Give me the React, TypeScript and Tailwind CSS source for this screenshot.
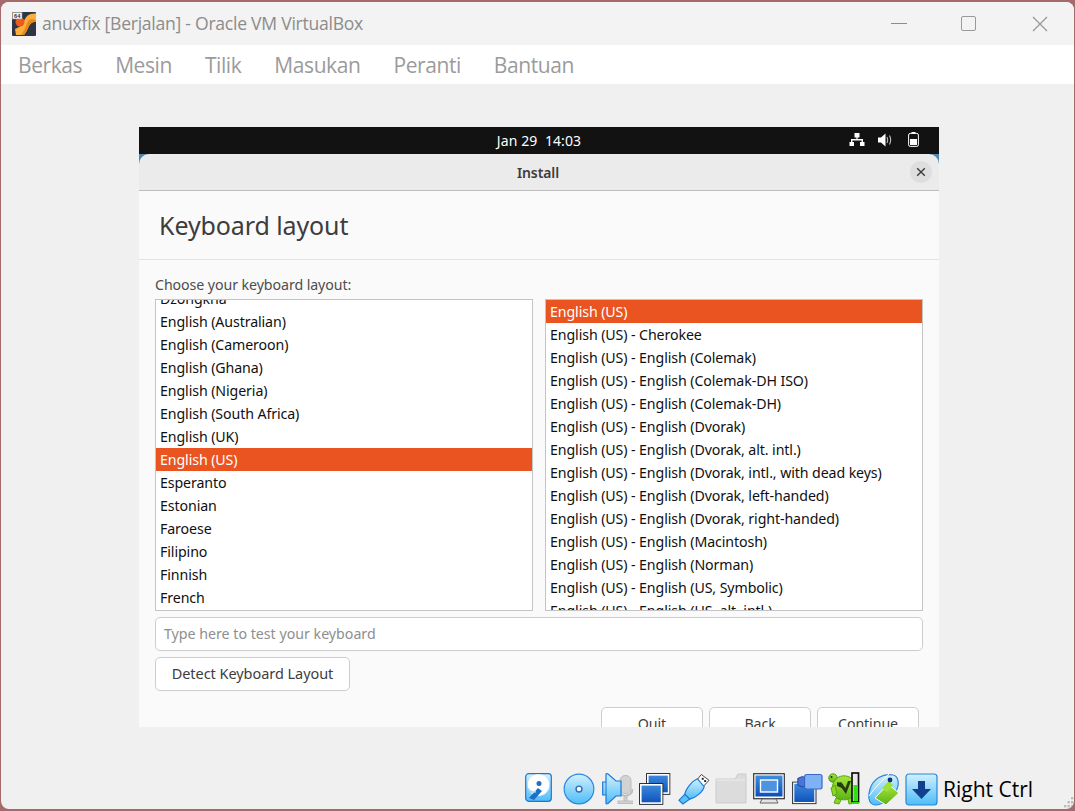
import React from "react";

const ubuntu = { fontFamily: '"Noto Sans", "DejaVu Sans", sans-serif' };

const leftRows = [
  "Dzongkha", "English (Australian)", "English (Cameroon)", "English (Ghana)", "English (Nigeria)",
  "English (South Africa)", "English (UK)", "English (US)", "Esperanto", "Estonian", "Faroese",
  "Filipino", "Finnish", "French",
];
const rightRows = [
  "English (US)", "English (US) - Cherokee", "English (US) - English (Colemak)",
  "English (US) - English (Colemak-DH ISO)", "English (US) - English (Colemak-DH)",
  "English (US) - English (Dvorak)", "English (US) - English (Dvorak, alt. intl.)",
  "English (US) - English (Dvorak, intl., with dead keys)", "English (US) - English (Dvorak, left-handed)",
  "English (US) - English (Dvorak, right-handed)", "English (US) - English (Macintosh)",
  "English (US) - English (Norman)", "English (US) - English (US, Symbolic)",
  "English (US) - English (US, alt. intl.)",
];

function ListBox({ rows, selected, offset }: { rows: string[]; selected: string; offset: string }) {
  let done = false;
  return (
    <div className="h-[312px] w-[378px] overflow-hidden border border-[#c4c4c4] bg-white">
      <div className={offset}>
        {rows.map((r) => {
          const sel = !done && r === selected;
          if (sel) done = true;
          return (
            <div
              key={r}
              className={`h-[23px] whitespace-nowrap pl-[4px] text-[14.2px] leading-[23px] tracking-[-0.1px] ${
                sel ? "bg-[#e95420] text-white" : "text-[#101010]"
              }`}
            >
              {r}
            </div>
          );
        })}
      </div>
    </div>
  );
}

function VBoxLogo() {
  return (
    <svg width="24" height="24" viewBox="0 0 24 24">
      <rect width="24" height="24" fill="#2f3541" rx="1" />
      <path d="M24 1.5 C17 1 14 4 12 9 C10 13 8 15 3 17 L4 23 L12 23 C15 20 16 15 18 12.5 C20 10 22 10 24 10 Z" fill="#fbb03b" />
      <path d="M16 9 C14 13 13 18 9 23 L12 23 C15 20 16 15 18 12.5 C20 10 22 10 24 10 L24 8 C20 7 18 7 16 9 Z" fill="#e8871c" />
      <circle cx="8" cy="10" r="4.5" fill="#ee5a1a" />
      <rect x="0.5" y="0.5" width="9.5" height="6.5" fill="#f2f2f2" stroke="#999" strokeWidth="0.6" />
      <text x="5.2" y="5.9" textAnchor="middle" fontSize="5.6" fontWeight="700" fill="#333" fontFamily="Liberation Sans, sans-serif">64</text>
    </svg>
  );
}

const Defs = () => (
  <defs>
    <linearGradient id="lb" x1="0" y1="0" x2="0" y2="1">
      <stop offset="0" stopColor="#d2f0ff" />
      <stop offset="1" stopColor="#4ebcf7" />
    </linearGradient>
    <linearGradient id="db" x1="0" y1="0" x2="0" y2="1">
      <stop offset="0" stopColor="#3f8de0" />
      <stop offset="1" stopColor="#0a4fb8" />
    </linearGradient>
    <linearGradient id="gr" x1="0" y1="0" x2="0" y2="1">
      <stop offset="0" stopColor="#a6e63c" />
      <stop offset="1" stopColor="#5cb414" />
    </linearGradient>
  </defs>
);

function Hdd() {
  return (
    <svg width="27" height="29" viewBox="0 0 27 29">
      <rect x="0.7" y="0.7" width="25.6" height="27.6" rx="3" fill="url(#lb)" stroke="#1976d2" strokeWidth="1.2" />
      <circle cx="13.5" cy="12" r="10.8" fill="#fff" />
      <circle cx="14" cy="10.5" r="2.5" fill="#1f6fc2" />
      <path d="M4 25 L13 15 L17 18 L9 27 Z" fill="#1f6fc2" />
      <path d="M2.5 15 C5 19 8 20 11 18.5" stroke="#9ad8fa" fill="none" strokeWidth="1.5" />
    </svg>
  );
}
function Cd() {
  return (
    <svg width="32" height="33" viewBox="0 0 33 34">
      <circle cx="16.5" cy="16.5" r="15.3" fill="url(#lb)" stroke="#2a86dc" strokeWidth="1.2" />
      <circle cx="16.5" cy="16.5" r="3" fill="#fff" stroke="#2a70b8" strokeWidth="1.5" />
    </svg>
  );
}
function Audio() {
  return (
    <svg width="31" height="32" viewBox="0 0 31 32">
      <g fill="#d2d2d2" stroke="#bdbdbd" strokeWidth="1">
        <rect x="18" y="2.5" width="11" height="18" rx="5" />
        <path d="M16 16 C16 25 30.5 25 30.5 16" fill="none" strokeWidth="2" />
        <rect x="22" y="24" width="3" height="4" />
        <rect x="16" y="28" width="15" height="2.5" />
      </g>
      <path d="M0.7 9 H4 L4 1.5 Q4 0 6 1 L14 8 H19 V23 H14 L6 30.5 Q4 31.5 4 30 V22 H0.7 Z" fill="url(#lb)" stroke="#1a78d8" strokeWidth="1.2" />
      <path d="M4 9 V22" stroke="#1a78d8" strokeWidth="1" />
    </svg>
  );
}
function Display() {
  return (
    <g>
      <rect x="0.7" y="0.7" width="23" height="20.5" fill="url(#db)" stroke="#222" strokeWidth="1.2" />
      <rect x="1.8" y="1.8" width="20.8" height="18.3" fill="none" stroke="#fff" strokeWidth="1.6" />
    </g>
  );
}
function Network() {
  return (
    <svg width="32" height="32" viewBox="0 0 32 32">
      <g transform="translate(7,0)"><Display /></g>
      <g transform="translate(0,10)"><Display /></g>
    </svg>
  );
}
function Usb() {
  return (
    <svg width="32" height="32" viewBox="0 0 33 33">
      <path d="M19 8 L24 1.5 L32 7.5 L26 14 Z" fill="#fff" stroke="#444" strokeWidth="1" />
      <rect x="24.5" y="5" width="2" height="2" fill="#222" />
      <rect x="27" y="7.3" width="2" height="2" fill="#222" />
      <path d="M20 6 L27 14 C26 19 18 26 12 27 L7 22 C8 16 15 8 20 6 Z" fill="url(#lb)" stroke="#1a78d8" strokeWidth="1.2" />
      <path d="M7 22 L12 27 L5 32 L1 28 Z" fill="#5cc0f6" stroke="#1a78d8" strokeWidth="1.2" />
    </svg>
  );
}
function Folder() {
  return (
    <svg width="32" height="31" viewBox="0 0 32 31">
      <path d="M1 6 L20 6 L23 1 H31 V30 H1 Z" fill="#dcdcdc" stroke="#cbcbcb" />
      <path d="M1 7 H30" stroke="#ececec" />
    </svg>
  );
}
function Screen() {
  return (
    <svg width="32" height="32" viewBox="0 0 32 32">
      <rect x="0.7" y="0.7" width="30.6" height="25" fill="#fff" stroke="#333" strokeWidth="1.2" />
      <rect x="2.5" y="2.5" width="27" height="21" fill="url(#db)" />
      <rect x="7.5" y="7" width="17" height="12" fill="#4d93df" stroke="#fff" strokeWidth="1.4" />
      <path d="M9 26 L7 30 H25 L23 26 Z" fill="#e4e4e4" stroke="#666" strokeWidth="1" />
    </svg>
  );
}
function Capture() {
  return (
    <svg width="31" height="32" viewBox="0 0 32 32">
      <rect x="0.7" y="9" width="24" height="22" fill="url(#db)" stroke="#333" strokeWidth="1.2" />
      <rect x="1.8" y="10" width="21.8" height="20" fill="none" stroke="#fff" strokeWidth="1.2" />
      <path d="M6 5 L11 3 L14 5 V12 L11 14 L6 12 Z" fill="#4a74d8" stroke="#23409b" strokeWidth="1" />
      <rect x="13" y="1" width="18" height="15" rx="2" fill="#7fb2f5" stroke="#3a66c4" strokeWidth="1.2" />
    </svg>
  );
}
function Turtle() {
  return (
    <svg width="33" height="33" viewBox="0 0 33 33" className="-mt-[1px]">
      <circle cx="5" cy="6" r="4.2" fill="url(#gr)" stroke="#4f9a10" />
      <circle cx="3.5" cy="5" r="1" fill="#222" />
      <path d="M8 7 C13 2 22 3 26 9 L27 22 C25 28 13 30 8 25 C3 21 3 12 8 7 Z" fill="url(#gr)" stroke="#5aa514" />
      <path d="M3 16 L7 13 L9 22 L5 24 Z M8 26 L13 28 L11 32 L6 31 Z M20 27 L24 26 L27 31 L21 32 Z" fill="#8ed428" stroke="#5aa514" />
      <path d="M9 10 L15 12 L14 16 L9 14 Z" fill="#283c12" />
      <path d="M10 11 L18 22 L23 9 L20 9 L17.5 16 L13 10 Z" fill="#283c12" />
      <rect x="24" y="1" width="6.5" height="29" fill="#e8e8e8" stroke="#111" strokeWidth="1.7" />
      <rect x="25.5" y="13" width="4" height="16" fill="#2fe014" />
      <path d="M23.5 31 H31" stroke="#39d814" strokeWidth="2" />
    </svg>
  );
}
function Mouse() {
  return (
    <svg width="33" height="33" viewBox="0 0 33 33">
      <path d="M3 16 C6 6 16 0 26 2 C32 3 32 12 30 16 C26 25 16 32 8 32 C1 31 1 23 3 16 Z" fill="url(#lb)" stroke="#2a86dc" strokeWidth="1.2" />
      <path d="M2 23 C8 14 16 7 22 1" stroke="#fff" fill="none" strokeWidth="1" />
      <path d="M8 25 L21 11 L32 20 L19 32 Z" fill="url(#gr)" stroke="#fff" strokeWidth="1" />
      <path d="M15 15 L22 8 L26 12 L20 19 Z" fill="#9fe03a" />
      <circle cx="23" cy="7" r="2.4" fill="#16306e" />
    </svg>
  );
}
function Arrow() {
  return (
    <svg width="33" height="33" viewBox="0 0 33 33">
      <rect x="1" y="1" width="31" height="31" rx="3" fill="url(#lb)" stroke="#2488dc" strokeWidth="1.2" />
      <path d="M13 8 H20 V16 H26 L16.5 26 L7 16 H13 Z" fill="#123f8e" />
    </svg>
  );
}

export default function App() {
  return (
    <div className="h-[811px] w-[1075px] overflow-hidden bg-[#a46a6c]" style={ubuntu}>
      <svg width="0" height="0" className="absolute"><Defs /></svg>
      <div className="mx-[1px] mt-[2px] flex h-[807px] flex-col overflow-hidden rounded-[8px] bg-[#f0f0f0]">
        {/* title bar */}
        <div className="flex h-[43px] shrink-0 items-center bg-[#f3f3f3] pl-[11px]">
          <VBoxLogo />
          <span
            className="ml-[6px] whitespace-nowrap text-[17.6px] tracking-[-0.27px] text-[#8c8c8c]"
            style={{ fontFamily: '"Open Sans", sans-serif' }}
          >
            anuxfix [Berjalan] - Oracle VM VirtualBox
          </span>
          <div className="ml-auto flex items-center pr-[26px]">
            <div className="mr-[54px] h-[1px] w-[16px] bg-[#8c8c8c]" />
            <div className="h-[15px] w-[15px] rounded-[2px] border-[1.5px] border-[#999999]" />
            <svg width="16" height="16" viewBox="0 0 16 16" className="ml-[56px]">
              <path d="M1 1 L15 15 M15 1 L1 15" stroke="#999999" strokeWidth="1.3" />
            </svg>
          </div>
        </div>
        {/* menu bar */}
        <div
          className="flex h-[39px] shrink-0 items-center gap-[33px] bg-white pl-[17px] pt-[2px] text-[21px] tracking-[-0.42px] text-[#9b9b9b]"
          style={{ fontFamily: '"Open Sans", sans-serif' }}
        >
          {["Berkas", "Mesin", "Tilik", "Masukan", "Peranti", "Bantuan"].map((m) => (
            <span key={m}>{m}</span>
          ))}
        </div>
        {/* guest display */}
        <div className="ml-[138px] mt-[43px] h-[600px] w-[800px] shrink-0 overflow-hidden bg-[#fafafa]">
          <div className="relative flex h-[27px] items-center justify-center bg-[#121212] text-[14px] text-white">
            <span className="whitespace-pre tracking-[0.1px]">Jan 29  14:03</span>
            <div className="absolute right-[20px] top-[5px] flex items-center">
              <svg width="16" height="14" viewBox="0 0 16 14">
                <path d="M5.5 0 H10.5 V4.5 H8.6 V6 H14 V9 H15.5 V13 H11 V9 H12.6 V7.4 H3.4 V9 H5 V13 H0.5 V9 H2 V6 H7.4 V4.5 H5.5 Z" fill="#fff" />
              </svg>
              <svg width="15" height="14" viewBox="0 0 15 14" className="ml-[13px]">
                <path d="M0 4.5 H3 L7.5 0.5 V13.5 L3 9.5 H0 Z" fill="#fff" />
                <path d="M9 4 Q10.5 7 9 10 M11.5 2.5 Q13.8 7 11.5 11.5" stroke="#bdbdbd" fill="none" strokeWidth="1.1" />
              </svg>
              <svg width="11" height="15" viewBox="0 0 11 15" className="ml-[15px]">
                <rect x="3.5" y="0" width="4" height="1.6" fill="#fff" />
                <rect x="0.6" y="1.4" width="9.8" height="13" rx="1.6" fill="none" stroke="#fff" strokeWidth="1" />
                <rect x="2" y="7" width="7" height="6" fill="#fff" />
              </svg>
            </div>
          </div>
          <div className="bg-[#4f86ad]">
            <div className="relative flex h-[37px] items-center justify-center rounded-t-[10px] border-b border-[#bdbdbd] bg-[#ebebeb]">
              <span className="mr-[2px] text-[14px] font-semibold tracking-[-0.1px] text-[#3d3d3d]">Install</span>
              <div className="absolute right-[7px] top-[7px] flex h-[22px] w-[22px] items-center justify-center rounded-full bg-[#dedede]">
                <svg width="10" height="10" viewBox="0 0 10 10">
                  <path d="M1.2 1.2 L8.8 8.8 M8.8 1.2 L1.2 8.8" stroke="#3d3d3d" strokeWidth="1.4" />
                </svg>
              </div>
            </div>
          </div>
          <div className="flex h-[69px] items-center border-b border-[#e2e2e2] pl-[20px] pt-[2px]">
            <h1 className="text-[25px] tracking-[-0.1px] text-[#3d3d3d]">Keyboard layout</h1>
          </div>
          <div className="px-[16px]">
            <div className="mt-[15px] h-[24px] text-[14.2px] leading-[20px] tracking-[-0.08px] text-[#4d4d4d]">
              Choose your keyboard layout:
            </div>
            <div className="flex justify-between">
              <ListBox rows={leftRows} selected="English (US)" offset="-mt-[13px]" />
              <ListBox rows={rightRows} selected="English (US)" offset="" />
            </div>
            <div className="mt-[6px] flex h-[34px] items-center rounded-[5px] border border-[#cdcdcd] bg-white pl-[8px] text-[14.2px] tracking-[0px] text-[#8e8e8e]">
              Type here to test your keyboard
            </div>
            <div className="mt-[6px] flex h-[34px] w-[195px] items-center justify-center rounded-[5px] border border-[#cdcdcd] bg-white text-[14.5px] tracking-[-0.05px] text-[#3d3d3d]">
              Detect Keyboard Layout
            </div>
            <div className="mt-[16px] flex justify-end gap-[6px] pr-[4px]">
              {["Quit", "Back", "Continue"].map((b) => (
                <div
                  key={b}
                  className="flex h-[34px] w-[102px] items-center justify-center rounded-[5px] border border-[#cdcdcd] bg-white text-[14.2px] tracking-[-0.08px] text-[#3d3d3d]"
                >
                  {b}
                </div>
              ))}
            </div>
          </div>
        </div>
        {/* status bar */}
        <div className="relative mt-auto flex h-[44px] items-start pl-[524px] pt-[8px]">
          <Hdd />
          <div className="ml-[11px]"><Cd /></div>
          <div className="ml-[7px]"><Audio /></div>
          <div className="ml-[6px]"><Network /></div>
          <div className="ml-[7px]"><Usb /></div>
          <div className="ml-[5px]"><Folder /></div>
          <div className="ml-[6px]"><Screen /></div>
          <div className="ml-[7px]"><Capture /></div>
          <div className="ml-[5px]"><Turtle /></div>
          <div className="ml-[6px]"><Mouse /></div>
          <div className="ml-[5px]"><Arrow /></div>
          <span
            className="ml-[5px] whitespace-nowrap text-[21px] leading-[32px] text-black"
            style={{ fontFamily: '"Open Sans", sans-serif' }}
          >
            Right Ctrl
          </span>
          <svg width="10" height="12" viewBox="0 0 10 12" className="absolute bottom-[1px] right-0">
            <g fill="#bdbdbd">
              <rect x="7" y="1" width="2.4" height="2.4" />
              <rect x="3.5" y="5" width="2.4" height="2.4" />
              <rect x="7" y="5" width="2.4" height="2.4" />
              <rect x="0" y="9" width="2.4" height="2.4" />
              <rect x="3.5" y="9" width="2.4" height="2.4" />
              <rect x="7" y="9" width="2.4" height="2.4" />
            </g>
          </svg>
        </div>
      </div>
    </div>
  );
}
